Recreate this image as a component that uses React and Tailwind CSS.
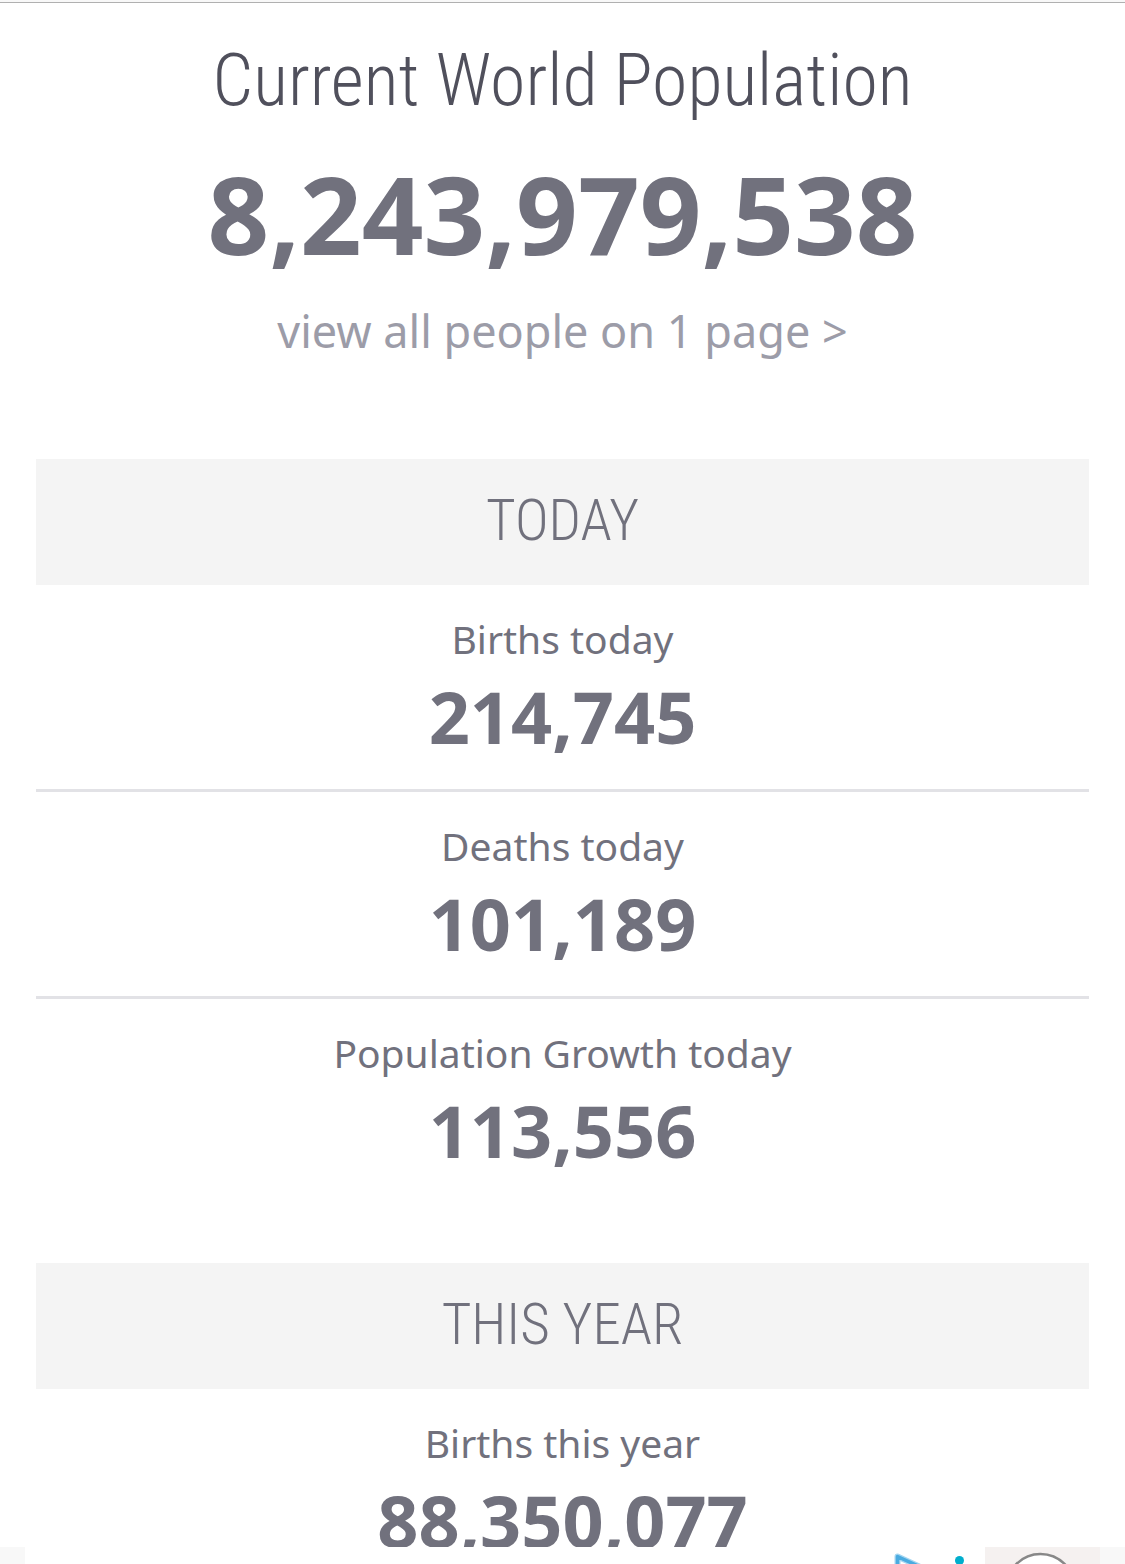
const today = [
  { label: 'Births today', value: '214,745' },
  { label: 'Deaths today', value: '101,189' },
  { label: 'Population Growth today', value: '113,556' },
];

const thisYear = [{ label: 'Births this year', value: '88,350,077' }];

const Section = ({ title, items }) => {
  return (
    <section className="mx-9 mb-15">
      <h2 className="bg-[#f4f4f4] pb-0.5 text-center font-['Roboto_Condensed','Roboto',sans-serif] font-light text-[57px] leading-[124px] text-[#71717d]">
        {title}
      </h2>
      <div className="divide-y-3 divide-[#e2e2e6]">
        {items.map((item) => (
          <div key={item.label} className="pt-7 pb-[22px] text-center">
            <p className="text-[39px] leading-[52px]">{item.label}</p>
            <p className="text-[72px] leading-[102px] font-bold">{item.value}</p>
          </div>
        ))}
      </div>
    </section>
  );
};

// Anchored ad strip, only its top edge is on screen
const AdBanner = () => {
  return (
    <aside className="flex h-[17px] shrink-0 overflow-hidden bg-[#f8f8f8] px-[25px]">
      <div className="flex flex-1 justify-end bg-white pr-4">
        <a href="#adchoices" aria-label="AdChoices">
          <svg width="80" height="40" viewBox="0 0 80 40" fill="none">
            <path d="M8.5 36V9.5L40 24L24 32" stroke="#a5d6f1" strokeWidth="6" strokeLinejoin="round" />
            <path d="M8.5 36V9.5L40 24L24 32" stroke="#4aabe0" strokeWidth="3.5" strokeLinejoin="round" />
            <circle cx="70.5" cy="13.5" r="4.5" fill="#00aecd" />
            <path d="M70.5 22V38" stroke="#00aecd" strokeWidth="7" />
          </svg>
        </a>
      </div>
      <button type="button" aria-label="Close ad" className="flex w-[115px] items-start justify-center bg-[#f5f1f0]">
        <svg width="84" height="84" viewBox="0 0 84 84" fill="none" className="shrink-0">
          <circle cx="39.5" cy="41" r="34" fill="#fff" stroke="#888" strokeWidth="2.5" />
          <path d="M28 30L50 52M50 30L28 52" stroke="#888" strokeWidth="3" />
        </svg>
      </button>
    </aside>
  );
};

const App = () => {
  return (
    <div className="flex h-screen flex-col overflow-hidden bg-white font-['Noto_Sans',sans-serif] text-[#71717d]">
      <div className="h-[3px] shrink-0 border-b border-[#b0b0b0] bg-[#f8f8f8]" />
      <div className="min-h-0 flex-1 overflow-hidden">
        <header className="pt-[33px] text-center">
          <h1 className="font-['Roboto_Condensed','Roboto',sans-serif] font-light text-[72px] leading-[90px] text-[#50505c]">
            Current World Population
          </h1>
          <p className="text-[108px] leading-[176px] font-bold">8,243,979,538</p>
          <a href="#people" className="block text-[45px] leading-[58px] text-[#9c9ca8]">
            view all people on 1 page &gt;
          </a>
        </header>
        <main className="mt-[99px]">
          <Section title="TODAY" items={today} />
          <Section title="THIS YEAR" items={thisYear} />
        </main>
      </div>
      <AdBanner />
    </div>
  );
};

export default App;
